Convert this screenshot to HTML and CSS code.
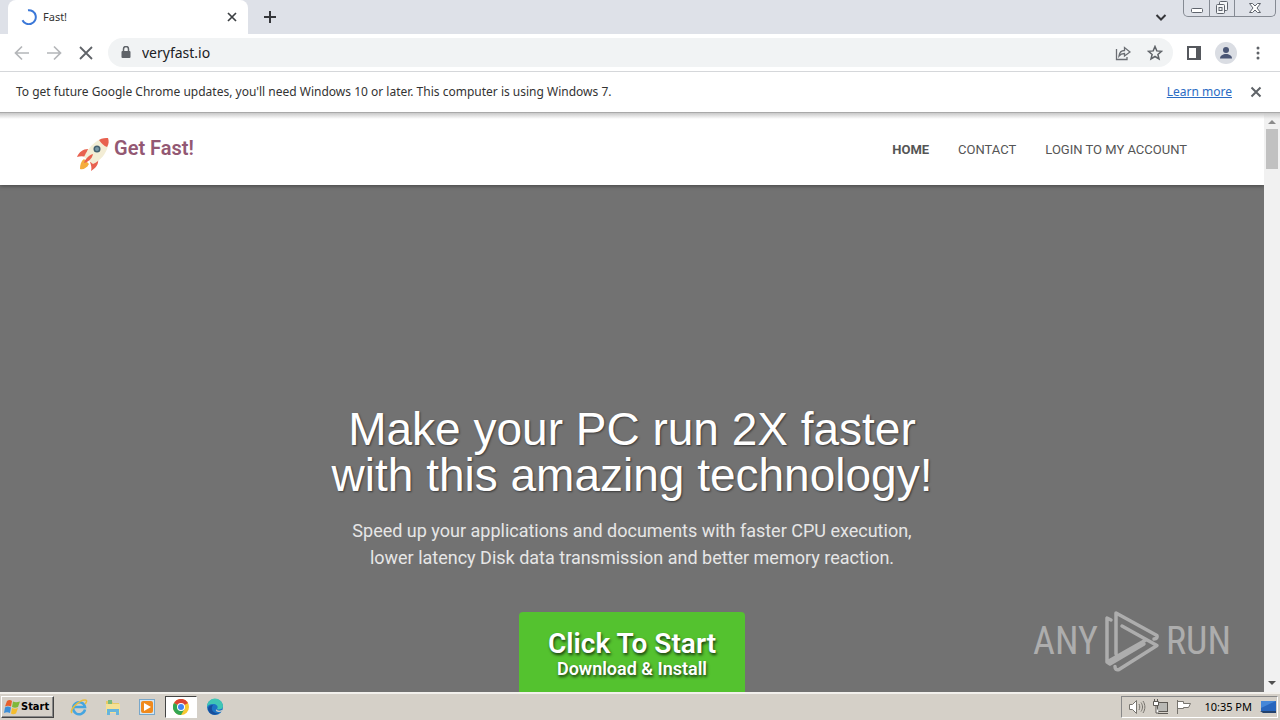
FILE: index.html
```html
<!DOCTYPE html>
<html lang="en">
<head>
<meta charset="utf-8">
<title>Fast!</title>
<link rel="stylesheet" href="styles.css">
</head>
<body>
<div class="desktop">
  <header class="tabstrip">
    <div class="tab">
      <svg class="spinner" width="16" height="16" viewBox="0 0 16 16"><path d="M7 1.200a7 7 0 1 1-5.500 10" fill="none" stroke="#3b78d8" stroke-width="2"/></svg>
      <span class="tab-title">Fast!</span>
      <button class="icon-btn" aria-label="Close tab"><svg width="16" height="16" viewBox="0 0 16 16"><path d="M4 4l8 8M12 4l-8 8" stroke="#3c4043" stroke-width="1.700"/></svg></button>
    </div>
    <button class="icon-btn new-tab" aria-label="New tab"><svg width="16" height="16" viewBox="0 0 16 16"><path d="M8 2v12M2 8h12" stroke="#35363a" stroke-width="2"/></svg></button>
    <button class="icon-btn tab-search" aria-label="Search tabs"><svg width="16" height="16" viewBox="0 0 16 16"><path d="M3.500 6l4.500 4.500L12.500 6" fill="none" stroke="#35363a" stroke-width="2"/></svg></button>
    <div class="window-controls">
      <button aria-label="Minimize"><svg width="14" height="12" viewBox="0 0 14 12"><rect x="1.500" y="6.500" width="11" height="4" rx="1" fill="#fff" stroke="#5f646d"/></svg></button>
      <button aria-label="Restore"><svg width="14" height="14" viewBox="0 0 14 14" fill="#f5f6f8" stroke="#5f646d"><rect x="4.500" y=".5" width="8" height="9" rx="1"/><rect x="1.500" y="3.500" width="8" height="9" rx="1"/><rect x="4" y="6.500" width="3" height="3"/></svg></button>
      <button class="wide" aria-label="Close"><svg width="14" height="12" viewBox="0 0 14 12"><path d="M1.500 1.500h3L7 4l2.500-2.500h3L9 6l3.500 4.500h-3L7 8l-2.500 2.500h-3L5 6z" fill="#fff" stroke="#5f646d"/></svg></button>
    </div>
  </header>

  <div class="toolbar">
    <button class="icon-btn" aria-label="Back"><svg width="18" height="18" viewBox="0 0 18 18"><path d="M16 9H3M9 2.500L2.500 9 9 15.500" fill="none" stroke="#b4b6b9" stroke-width="1.700"/></svg></button>
    <button class="icon-btn" aria-label="Forward"><svg width="18" height="18" viewBox="0 0 18 18"><path d="M2 9h13M9 2.500L15.500 9 9 15.500" fill="none" stroke="#b4b6b9" stroke-width="1.700"/></svg></button>
    <button class="icon-btn" aria-label="Stop"><svg width="18" height="18" viewBox="0 0 18 18"><path d="M3 3l12 12M15 3L3 15" stroke="#5f6368" stroke-width="1.800"/></svg></button>
    <div class="omnibox">
      <svg width="12" height="14" viewBox="0 0 12 14"><rect x="1.500" y="5" width="9" height="7" rx="1" fill="#5f6368"/><path d="M3.500 6V3a2.500 2.500 0 0 1 5 0v3" fill="none" stroke="#5f6368" stroke-width="1.500"/></svg>
      <input class="url" aria-label="Address" value="veryfast.io">
      <button class="icon-btn" aria-label="Share"><svg width="16" height="16" viewBox="0 0 16 16" fill="none" stroke="#6b6e73" stroke-width="1.300"><path d="M1.500 4v10.500H12V12M4 11c.5-4 2.500-5.500 5.500-5.500V2.500L15 7l-5.500 4V8.500C7 8.500 5.500 9 4 11z"/></svg></button>
      <button class="icon-btn" aria-label="Bookmark"><svg width="16" height="16" viewBox="0 0 16 16"><path d="M8 1.500l1.800 4.400 4.700.4-3.600 3.100 1.100 4.600-4-2.500L4 14l1.100-4.600-3.600-3.100 4.700-.4z" fill="none" stroke="#5f6368" stroke-width="1.500"/></svg></button>
    </div>
    <button class="icon-btn" aria-label="Side panel"><svg width="16" height="16" viewBox="0 0 16 16"><rect x="2" y="2" width="12" height="12" fill="none" stroke="#55585d" stroke-width="2"/><path d="M10 2h4v12h-4z" fill="#55585d"/></svg></button>
    <button class="icon-btn" aria-label="Profile"><svg width="22" height="22" viewBox="0 0 22 22"><circle cx="11" cy="11" r="11" fill="#dadde3"/><circle cx="11" cy="8" r="3" fill="#4a5675"/><path d="M5 16.500c0-3 3-4.500 6-4.500s6 1.500 6 4.500z" fill="#4a5675"/></svg></button>
    <button class="icon-btn" aria-label="Menu"><svg width="16" height="16" viewBox="0 0 16 16" fill="#5f6368"><circle cx="8" cy="3" r="1.500"/><circle cx="8" cy="8" r="1.500"/><circle cx="8" cy="13" r="1.500"/></svg></button>
  </div>

  <div class="infobar">
    <span class="info-text">To get future Google Chrome updates, you'll need Windows 10 or later. This computer is using Windows 7.</span>
    <a href="#">Learn more</a>
    <button class="icon-btn" aria-label="Dismiss"><svg width="16" height="16" viewBox="0 0 16 16"><path d="M3.500 3.500l9 9M12.500 3.500l-9 9" stroke="#5f6368" stroke-width="2"/></svg></button>
  </div>

  <div class="viewport">
    <div class="page">
      <div class="site-header">
        <a class="brand" href="#">
          <svg width="36" height="36" viewBox="0 0 36 36">
            <path d="M13 13c-5 0-9 3-11 8 3-1 6-1 9 0zM23 23c1 5-2 9-7 12 1-3 0-6-1-9z" fill="#e8614f"/>
            <path d="M9 23l5 5c-2 4-6 6-9 5 0-4 1-8 4-10z" fill="#f5ad3d"/>
            <path d="M26 3l7 0v7c-2 8-8 15-15 18l-9-7C13 12 19 6 26 3z" fill="#f3edd5"/>
            <path d="M24 4c3-2 7-2 9-2 1 3 1 6-1 9-3-1-6-4-8-7z" fill="#e8614f"/>
            <path d="M18 18c-4 1-8 5-9 9 4-1 8-4 9-9z" fill="#e8614f"/>
            <circle cx="22" cy="13" r="3.500" fill="#45616f"/><circle cx="22" cy="13" r="2" fill="#7898a6"/>
          </svg>
          <span>Get Fast!</span>
        </a>
        <nav class="menu">
          <a class="current" href="#">HOME</a>
          <a href="#">CONTACT</a>
          <a href="#">LOGIN TO MY ACCOUNT</a>
        </nav>
      </div>
      <main class="hero">
        <h1>Make your PC run 2X faster<br>with this amazing technology!</h1>
        <p>Speed up your applications and documents with faster CPU execution,<br>lower latency Disk data transmission and better memory reaction.</p>
        <button class="cta"><span class="cta-title">Click To Start</span><span class="cta-sub">Download &amp; Install</span></button>
      </main>
      <div class="watermark">
        <span>ANY</span>
        <svg width="56" height="64" viewBox="0 0 56 64" fill="none" stroke="#adadad" stroke-width="3.500" stroke-linejoin="round" stroke-linecap="round"><path d="M7 11L3 9v44l38-21.500M12 45V4l41 22.500q1 3-3 3.500M18 17l35 19.500-38 24q-4 1-4-3M3 53l3 2 34-20"/></svg>
        <span>RUN</span>
      </div>
    </div>
    <div class="scrollbar">
      <svg width="16" height="14" viewBox="0 0 16 14"><path d="M4 11l4-4 4 4z" fill="#8b8b8b"/></svg>
      <div class="thumb"></div>
      <svg width="16" height="16" viewBox="0 0 16 16"><path d="M4 5l4 4 4-4z" fill="#505050"/></svg>
    </div>
  </div>

  <footer class="taskbar">
    <button class="start"><svg width="16" height="16" viewBox="0 0 16 16"><path d="M3 2c2-1.500 4-1 5 0L7 7.500C5 6.500 3 6.500 1 7.500z" fill="#e8602c"/><path d="M9 2.500c2 1 4 1 7 0l-2 5.500c-2 1-4 1-6 0z" fill="#7fb83a"/><path d="M1 8.500c2-1.500 4-1 6 0l-1 5.500c-2-1-4-1-6 0z" fill="#3d8fd8"/><path d="M8 9c2 1 4 1 6 0l-2 5.500c-2 1-4 1-5 0z" fill="#f4bd2e"/></svg>Start</button>
    <div class="quick">
      <button aria-label="Internet Explorer"><svg width="18" height="18" viewBox="0 0 18 18" fill="none"><path d="M15 11.500A6 6 0 1 1 15 9H4" stroke="#45a5e0" stroke-width="2.500"/><path d="M2 15C-1 12 9 2 15 2c3 0 1 3 0 4" stroke="#e9bd3e" stroke-width="1.500"/></svg></button>
      <button aria-label="Explorer"><svg width="18" height="18" viewBox="0 0 18 18"><path d="M2 3h6l1 2h6v10H2z" fill="#e8c965"/><path d="M4 2h4v4H4z" fill="#79b97c"/><path d="M2 6h14v9H2z" fill="#f4e196"/><path d="M3 17v-6h12v6h-3v-3H6v3z" fill="#67b5dc"/></svg></button>
      <button aria-label="Media Player"><svg width="18" height="18" viewBox="0 0 18 18"><rect x="1.500" y="1.500" width="15" height="15" fill="#d3e6f4" stroke="#78a7ca"/><rect x="3" y="3" width="12" height="12" rx="2" fill="#f08a1d"/><path d="M6 5l7 4-7 4z" fill="#fff"/></svg></button>
      <button class="active" aria-label="Chrome"><svg width="16" height="16" viewBox="0 0 16 16"><circle cx="8" cy="8" r="8" fill="#f8c832"/><path d="M8 8L1 4a8 8 0 0 1 14 0z" fill="#dc4435"/><path d="M1 4a8 8 0 0 0 7 12l3.500-6L8 8z" fill="#33a653"/><circle cx="8" cy="8" r="4" fill="#fff"/><circle cx="8" cy="8" r="3" fill="#4285f4"/></svg></button>
      <button aria-label="Edge"><svg width="18" height="18" viewBox="0 0 18 18"><circle cx="9" cy="9" r="8" fill="#1c74c4"/><path d="M1 9a8 8 0 0 1 16-1c0 4-5 4-6 3 2-3-1-5-4-5-3 0-5 1-6 3z" fill="#3fc6b5"/><path d="M7 7c-3 4 0 9 6 8-4 3-10 2-11-4 0-2 2-4 5-4z" fill="#174e9c"/><path d="M10 11c1 2 4 2 6 1l1 1c-4 2-8 1-7-2z" fill="#d5d0c8"/></svg></button>
    </div>
    <div class="tray">
      <svg width="18" height="16" viewBox="0 0 18 16" stroke="#77746e" fill="none"><path d="M1.500 5.500h3l4-4v13l-4-4h-3z" fill="#fff"/><path d="M11 5c1 2 1 4 0 6M13 3.500c2 3 2 6 0 9M15 2c2.500 4 2.500 8 0 12"/></svg>
      <svg width="18" height="16" viewBox="0 0 18 16" stroke="#5c5954" fill="#fff"><rect x="5.500" y="3.500" width="10" height="9" fill="#b8b8b4"/><path d="M6 14.500h10M1.500 2.500h5v4h-5zM2.500 2V0M5.500 2V0M4 7v7h3"/></svg>
      <svg width="16" height="16" viewBox="0 0 16 16" stroke="#77746e" fill="#fff"><path d="M1.500 1v14M1.500 2.500h6v2h7l-2 4h-5v1h-6z"/></svg>
      <time>10:35 PM</time>
      <svg width="16" height="14" viewBox="0 0 16 14"><rect x="1" y="1" width="15" height="10" fill="#2866bd"/><path d="M1 1h15L1 8z" fill="#4587d8"/><path d="M0 11h16v2H3z" fill="#24426d"/></svg>
    </div>
  </footer>
</div>
</body>
</html>
```
FILE: styles.css
```css
* { box-sizing: border-box; }
body { margin: 0; font: 12px/16px "Noto Sans", Tahoma, sans-serif; color: #333; }
button { border: 0; padding: 0; background: none; font: inherit; color: inherit; }
svg { display: block; flex: none; }
a { color: inherit; text-decoration: none; }
.desktop { display: flex; flex-direction: column; height: 100vh; overflow: hidden; }
.icon-btn { display: grid; place-items: center; flex: none; }

.tabstrip { display: flex; align-items: center; height: 34px; padding: 0 4px 0 8px; background: #dee1e8; flex: none; }
.tab { display: flex; align-items: center; gap: 6px; width: 240px; height: 34px; padding: 0 8px 0 13px; background: #fff; border-radius: 8px 8px 0 0; }
.tab-title { flex: 1; font-size: 11px; }
.new-tab { margin-left: 14px; }
.tab-search { margin-left: auto; margin-right: 14px; }
.window-controls { display: flex; align-self: flex-start; height: 17px; border: 1px solid #858a93; border-top: 0; border-radius: 0 0 5px 5px; }
.window-controls button { display: grid; place-items: center; width: 25px; }
.window-controls button + button { border-left: 1px solid #858a93; }
.window-controls .wide { width: 41px; }

.toolbar { display: flex; align-items: center; gap: 13px; height: 38px; padding: 0 14px 0 13px; background: #fff; border-bottom: 1px solid #d5d7da; flex: none; }
.toolbar > .icon-btn:nth-child(-n+3) { margin-right: 1px; }
.omnibox { display: flex; align-items: center; gap: 16px; flex: 1; height: 29px; margin-left: -1px; padding: 0 10px 0 12px; border-radius: 15px; background: #f1f3f4; }
.url { flex: 1; min-width: 0; border: 0; padding: 0; margin-left: -6px; background: none; font: 14px/20px "Noto Sans", Tahoma, sans-serif; color: #202124; }

.infobar { display: flex; align-items: center; height: 41px; padding: 0 16px; background: #fff; border-bottom: 1px solid #a9a9a9; flex: none; }
.info-text { flex: 1; }
.infobar a { margin-right: 16px; color: #2b6cc4; text-decoration: underline; }

.viewport { display: flex; flex: 1; min-height: 0; }
.page { position: relative; display: flex; flex-direction: column; flex: 1; overflow: hidden; font-family: Roboto, sans-serif; }
.site-header { display: flex; justify-content: space-between; flex: none; height: 72px; padding: 2px 77px 0 75px; background: linear-gradient(#c8c8c8, #fff 6px); box-shadow: 0 1px 4px rgba(0, 0, 0, .4); z-index: 1; }
.brand { display: flex; align-items: center; gap: 3px; padding-top: 8px; }
.brand span { padding-bottom: 12px; font-size: 20px; font-weight: 600; line-height: 24px; color: #935873; }
.menu { display: flex; align-items: center; gap: 29px; font-size: 13px; color: #555; }
.menu .current { font-weight: 700; }

.hero { display: flex; flex-direction: column; align-items: center; flex: 1; padding-top: 221px; background: #727272; color: #fff; text-align: center; }
.hero h1 { margin: 0; font: 46px/46px "Liberation Sans", Arial, sans-serif; text-shadow: 1px 1px 2px rgba(0, 0, 0, .5); }
.hero p { margin: 19px 0 41px; font-size: 18px; line-height: 27px; color: #e6e6e6; }
.cta { display: flex; flex-direction: column; align-items: center; flex: none; height: 96px; padding: 17px 29px; border-radius: 4px; background: #54c22f; color: #fff; font-weight: 600; text-shadow: 1px 2px 3px rgba(0, 0, 0, .7); }
.cta-title { font-size: 28px; line-height: 30px; }
.cta-sub { font-size: 18px; line-height: 20px; }
.watermark { position: absolute; right: 33px; bottom: 19px; display: flex; align-items: center; gap: 6px; color: #adadad; font: 38px/44px "Roboto Condensed", Roboto, sans-serif; }

.scrollbar { display: flex; flex-direction: column; width: 16px; background: linear-gradient(#c8c8c8, #f1f1f1 6px); }
.thumb { height: 40px; margin: 2px 2px auto; background: #c1c1c1; }

.taskbar { display: flex; align-items: center; height: 28px; flex: none; border-top: 2px solid #f2f0ec; background: #d5d0c8; color: #000; font-size: 11px; }
.start { display: flex; align-items: center; gap: 1px; width: 53px; height: 22px; margin-left: 1px; padding-left: 2px; border: 1px solid; border-color: #fff #444 #444 #fff; box-shadow: inset -1px -1px #888; font: bold 11px/16px "DejaVu Sans Condensed", Tahoma, sans-serif; }
.quick { display: flex; gap: 2px; margin-left: 9px; }
.quick button { display: grid; place-items: center; width: 32px; height: 22px; }
.quick .active { border: 1px solid; border-color: #444 #fff #fff #444; background: #fff; }
.tray { display: flex; align-items: center; gap: 6px; height: 22px; margin-left: auto; margin-right: 2px; padding: 0 1px 0 6px; border: 1px solid; border-color: #888 #fff #fff #888; }
.tray time { margin: 0 2px 0 6px; }
```
